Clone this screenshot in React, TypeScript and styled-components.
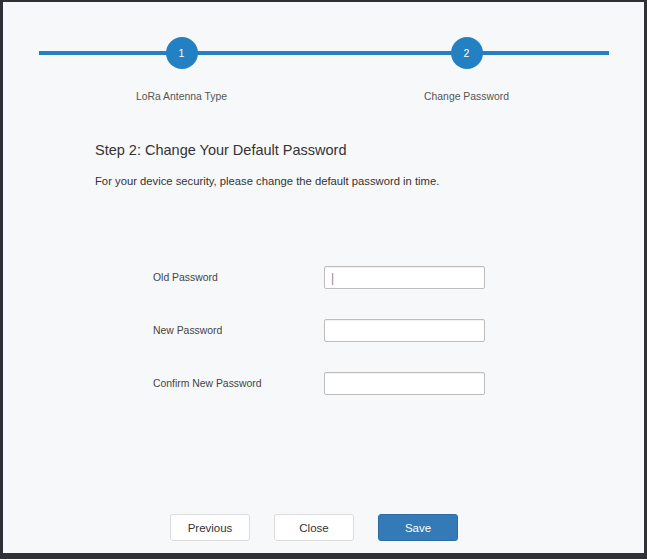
import styled, { createGlobalStyle } from 'styled-components';

const GlobalStyle = createGlobalStyle`
  html, body {
    margin: 0;
    padding: 0;
    background: #2f3136;
  }
  body {
    font-family: 'Liberation Sans', Arial, sans-serif;
  }
`;

const steps = [
  { number: 1, label: 'LoRa Antenna Type' },
  { number: 2, label: 'Change Password' },
];

const fields = ['Old Password', 'New Password', 'Confirm New Password'];

function App() {
  return (
    <>
      <GlobalStyle />
      <Frame>
        <Panel>
          <Stepper>
            {steps.map((step) => (
              <Step key={step.number}>
                <Circle>{step.number}</Circle>
                <StepLabel>{step.label}</StepLabel>
              </Step>
            ))}
          </Stepper>

          <Intro>
            <Title>Step 2: Change Your Default Password</Title>
            <Description>For your device security, please change the default password in time.</Description>
          </Intro>

          <Form>
            {fields.map((field, index) => (
              <FormRow key={field}>
                <FieldLabel>{field}</FieldLabel>
                <Input type="password" placeholder={index === 0 ? '|' : ''} />
              </FormRow>
            ))}
          </Form>

          <Footer>
            <Button>Previous</Button>
            <Button>Close</Button>
            <Button $primary>Save</Button>
          </Footer>
        </Panel>
      </Frame>
    </>
  );
}

export default App;

const Frame = styled.div`
  width: 647px;
  height: 559px;
  padding: 2px 3px 6px 3px;
  box-sizing: border-box;
`;

const Panel = styled.div`
  width: 641px;
  height: 551px;
  background: #f7f8fa;
  display: flex;
  flex-direction: column;
  box-sizing: border-box;
`;

const Stepper = styled.div`
  position: relative;
  display: grid;
  grid-template-columns: 1fr 1fr;
  width: 570px;
  margin: 35px 0 0 36px;

  &::before {
    content: '';
    position: absolute;
    left: 0;
    right: 0;
    top: 14px;
    height: 4px;
    background: #2380c3;
  }
`;

const Step = styled.div`
  display: flex;
  flex-direction: column;
  align-items: center;
  gap: 21px;
  position: relative;
`;

const Circle = styled.div`
  width: 32px;
  height: 32px;
  border-radius: 50%;
  background: #2380c3;
  color: #fff;
  font-size: 10.5px;
  display: flex;
  align-items: center;
  justify-content: center;
`;

const StepLabel = styled.div`
  font-size: 10.4px;
  color: #555;
  line-height: 14px;
`;

const Intro = styled.div`
  display: flex;
  flex-direction: column;
  gap: 16px;
  padding: 38px 0 0 92px;
`;

const Title = styled.div`
  font-size: 14.5px;
  color: #333;
  line-height: 17px;
`;

const Description = styled.div`
  font-size: 11.25px;
  color: #333;
  line-height: 13px;
`;

const Form = styled.div`
  display: flex;
  flex-direction: column;
  gap: 30px;
  padding: 78px 0 0 150px;
`;

const FormRow = styled.div`
  display: grid;
  grid-template-columns: 171px 161px;
  align-items: center;
`;

const FieldLabel = styled.div`
  font-size: 10.4px;
  color: #444;
`;

const Input = styled.input`
  width: 161px;
  height: 23px;
  box-sizing: border-box;
  border: 1px solid #bdbdbd;
  border-radius: 2px;
  background: #fff;
  box-shadow: inset 0 1px 1px rgba(0, 0, 0, 0.06);
  padding: 0 6px;
  font-size: 12px;
  outline: none;

  &::placeholder {
    color: #888;
  }
`;

const Footer = styled.div`
  margin-top: auto;
  display: flex;
  gap: 24px;
  padding: 0 0 12px 167px;
`;

const Button = styled.button<{ $primary?: boolean }>`
  width: 80px;
  height: 27px;
  border-radius: 3px;
  border: 1px solid ${(props) => (props.$primary ? '#2e6da4' : '#dcdcdc')};
  background: ${(props) => (props.$primary ? '#337ab7' : '#fff')};
  color: ${(props) => (props.$primary ? '#fff' : '#333')};
  font-family: 'Liberation Sans', Arial, sans-serif;
  font-size: 11.5px;
  cursor: pointer;
`;
